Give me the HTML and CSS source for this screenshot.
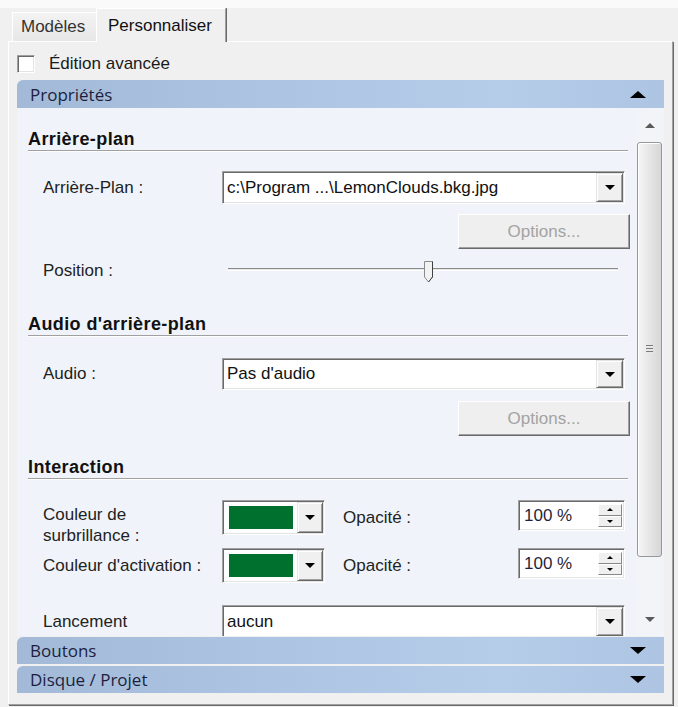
FILE: index.html
```html
<!DOCTYPE html>
<html lang="fr">
<head>
    <meta charset="UTF-8">
    <title>Personnaliser</title>
    <link rel="stylesheet" href="styles.css">
</head>
<body>
    <div class="tabs">
        <div class="tab">Modèles</div>
        <div class="tab active">Personnaliser</div>
    </div>

    <div class="panel">
        <label class="check"><span class="box"></span>Édition avancée</label>

        <div class="accordion">
            <div class="acc-head first">Propriétés<span class="tri up"></span></div>
            <div class="acc-body">
                <div class="props">
                    <div class="section-title">Arrière-plan</div>
                    <div class="field">
                        <span class="label">Arrière-Plan :</span>
                        <div class="combo">
                            <span class="combo-text">c:\Program ...\LemonClouds.bkg.jpg</span>
                            <span class="drop"><span class="arrow"></span></span>
                        </div>
                    </div>
                    <div class="actions"><button class="btn" disabled>Options...</button></div>
                    <div class="field slider-row">
                        <span class="label">Position :</span>
                        <div class="slider">
                            <div class="track"></div>
                            <svg class="thumb" width="11" height="22" viewBox="0 0 11 22">
                                <path d="M1.5 0.5 H9.5 V16 L5.5 21 L1.5 16 Z" fill="#f2f2f2" stroke="#8a8a8a"/>
                                <path d="M9.5 0.5 V16 L5.5 21" fill="none" stroke="#404040"/>
                            </svg>
                        </div>
                    </div>

                    <div class="section-title second">Audio d'arrière-plan</div>
                    <div class="field audio-row">
                        <span class="label">Audio :</span>
                        <div class="combo short">
                            <span class="combo-text">Pas d'audio</span>
                            <span class="drop"><span class="arrow"></span></span>
                        </div>
                    </div>
                    <div class="actions tight"><button class="btn" disabled>Options...</button></div>

                    <div class="section-title">Interaction</div>
                    <div class="field color-row">
                        <span class="label two-line">Couleur de<br>surbrillance :</span>
                        <div class="picker">
                            <span class="swatch"></span>
                            <span class="drop"><span class="arrow"></span></span>
                        </div>
                        <span class="opacity">Opacité :</span>
                        <div class="spinner">
                            <span class="spin-text">100 %</span>
                            <span class="spin-btns"><span><i class="tiny up"></i></span><span><i class="tiny down"></i></span></span>
                        </div>
                    </div>
                    <div class="field color-row next">
                        <span class="label">Couleur d'activation :</span>
                        <div class="picker">
                            <span class="swatch"></span>
                            <span class="drop"><span class="arrow"></span></span>
                        </div>
                        <span class="opacity">Opacité :</span>
                        <div class="spinner">
                            <span class="spin-text">100 %</span>
                            <span class="spin-btns"><span><i class="tiny up"></i></span><span><i class="tiny down"></i></span></span>
                        </div>
                    </div>
                    <div class="field launch-row">
                        <span class="label">Lancement</span>
                        <div class="combo">
                            <span class="combo-text">aucun</span>
                            <span class="drop"><span class="arrow"></span></span>
                        </div>
                    </div>
                </div>

                <div class="scrollbar">
                    <div class="sb-btn"><span class="sb-arrow up"></span></div>
                    <div class="sb-thumb"><span class="grip"></span></div>
                    <div class="sb-track"></div>
                    <div class="sb-btn"><span class="sb-arrow down"></span></div>
                </div>
            </div>
            <div class="acc-head">Boutons<span class="tri down"></span></div>
            <div class="acc-head gap">Disque / Projet<span class="tri down"></span></div>
        </div>
    </div>
</body>
</html>
```

FILE: styles.css
```css
* {
    margin: 0;
    padding: 0;
    box-sizing: border-box;
}

body {
    font-family: "Liberation Sans", Arial, sans-serif;
    font-size: 17px;
    color: #1a1a1a;
    background: linear-gradient(#fafafa 8px, #f0f0f0 8px);
    padding-top: 8px;
    width: 678px;
    height: 707px;
    overflow: hidden;
}

/* tab strip */
.tabs {
    display: flex;
    align-items: flex-end;
    height: 33px;
    margin-left: 12px;
    position: relative;
    z-index: 1;
}

.tab {
    width: 84px;
    height: 29px;
    padding-left: 8px;
    display: flex;
    align-items: center;
    background: linear-gradient(#f3f3f3, #e7e7e7);
    border-top: 1px solid #fff;
    border-left: 1px solid #fff;
    color: #333;
}

.tab.active {
    width: 130px;
    height: 34px;
    margin-bottom: -1px;
    padding-left: 11px;
    background: #f0f0f0;
    border-right: 1px solid #a0a0a0;
    box-shadow: 1px 0 0 #696969;
    color: #111;
}

.panel {
    margin-left: 8px;
    width: 665px;
    border-top: 1px solid #fff;
    border-left: 1px solid #fff;
    border-right: 1px solid #a0a0a0;
    border-bottom: 1px solid #a0a0a0;
    box-shadow: 1px 1px 0 #696969;
    padding: 6px 8px 11px 8px;
}

.check {
    display: flex;
    align-items: center;
    gap: 14px;
    height: 32px;
}

.box {
    width: 18px;
    height: 18px;
    background: #fff;
    border-top: 1px solid #a0a0a0;
    border-left: 1px solid #a0a0a0;
    border-right: 1px solid #fff;
    border-bottom: 1px solid #fff;
    box-shadow: inset 1px 1px 0 #696969, inset -1px -1px 0 #e3e3e3;
}

/* accordion */
.acc-head {
    height: 27px;
    display: flex;
    align-items: center;
    justify-content: space-between;
    padding: 0 18px 0 13px;
    margin-top: 1px;
    font-family: "Open Sans", sans-serif;
    font-size: 17px;
    color: #1d1e3f;
    background: linear-gradient(90deg, #a2bad7, #adc5e2 40%, #b5cde9 75%, #adc5e2);
    border-top-left-radius: 6px;
}

.acc-head.first {
    height: 28px;
    margin-top: 0;
}

.acc-head.gap {
    margin-top: 2px;
}

.tri {
    width: 0;
    height: 0;
    border-left: 8px solid transparent;
    border-right: 8px solid transparent;
}

.tri.up {
    border-bottom: 7px solid #000;
}

.tri.down {
    border-top: 7px solid #000;
}

.acc-body {
    display: flex;
    height: 528px;
    background: #f0f4fa;
}

.props {
    flex: 1;
    overflow: hidden;
    padding: 0 9px 0 11px;
}

.section-title {
    height: 23px;
    margin-top: 20px;
    display: flex;
    align-items: center;
    font-size: 18px;
    font-weight: bold;
    letter-spacing: 0.4px;
    color: #111;
    border-bottom: 1px solid #a0a0a0;
    box-shadow: 0 1px 0 #fff;
}

.section-title.second {
    margin-top: 30px;
}

.field {
    display: grid;
    grid-template-columns: 179px 1fr;
    align-items: center;
    margin: 20px 3px 0 15px;
}

.label {
    color: #222;
}

/* combo box */
.combo {
    height: 33px;
    display: flex;
    background: #fff;
    border-top: 1px solid #a0a0a0;
    border-left: 1px solid #a0a0a0;
    border-right: 1px solid #fff;
    border-bottom: 1px solid #fff;
    box-shadow: inset 1px 1px 0 #696969, inset -1px -1px 0 #e3e3e3;
}

.combo.short {
    height: 32px;
}

.combo-text {
    flex: 1;
    display: flex;
    align-items: center;
    padding-left: 4px;
    color: #111;
    white-space: nowrap;
}

.drop {
    width: 27px;
    margin: 1px 1px 1px 0;
    display: flex;
    align-items: center;
    justify-content: center;
    background: #f0f0f0;
    border-top: 1px solid #e3e3e3;
    border-left: 1px solid #e3e3e3;
    border-right: 1px solid #696969;
    border-bottom: 1px solid #696969;
    box-shadow: inset 1px 1px 0 #fff, inset -1px -1px 0 #a0a0a0;
}

.arrow {
    width: 0;
    height: 0;
    border-left: 5px solid transparent;
    border-right: 5px solid transparent;
    border-top: 5px solid #000;
}

.actions {
    display: flex;
    justify-content: flex-end;
    margin: 10px 1px 0 0;
}

.actions.tight {
    margin-top: 11px;
}

.btn {
    width: 172px;
    height: 35px;
    margin-right: -3px;
    font-family: "Liberation Sans", Arial, sans-serif;
    font-size: 17px;
    color: #a3a3a3;
    background: #efefef;
    border-top: 1px solid #fff;
    border-left: 1px solid #fff;
    border-right: 1px solid #696969;
    border-bottom: 1px solid #696969;
    box-shadow: inset -1px -1px 0 #a0a0a0;
}

/* slider */
.slider-row {
    margin-top: 10px;
    height: 24px;
}

.slider {
    position: relative;
    height: 24px;
    margin-left: 6px;
    width: 390px;
}

.track {
    margin-top: 9px;
    height: 3px;
    background: #e8e8e8;
    border-top: 1px solid #8a8a8a;
    border-bottom: 1px solid #fff;
}

.thumb {
    position: absolute;
    left: 195px;
    top: 2px;
}

.audio-row {
    margin-top: 22px;
}

/* colour rows */
.color-row {
    grid-template-columns: 179px 103px 1fr 107px;
    grid-template-rows: 35px;
    align-items: start;
    height: 35px;
    margin-top: 21px;
}

.color-row.next {
    margin-top: 13px;
}

.color-row .label {
    align-self: center;
}

.color-row .two-line {
    align-self: start;
    line-height: 21px;
    padding-top: 4px;
}

.picker {
    height: 35px;
    display: flex;
    background: #fff;
    border-top: 1px solid #a0a0a0;
    border-left: 1px solid #a0a0a0;
    border-right: 1px solid #fff;
    border-bottom: 1px solid #fff;
    box-shadow: inset 1px 1px 0 #696969, inset -1px -1px 0 #e3e3e3;
}

.swatch {
    width: 64px;
    margin: 5px 4px 5px 6px;
    background: #00702e;
}

.picker .drop {
    flex: 1;
}

.opacity {
    align-self: center;
    padding-left: 18px;
    color: #222;
}

.spinner {
    height: 31px;
    display: flex;
    background: #fff;
    border-top: 1px solid #a0a0a0;
    border-left: 1px solid #a0a0a0;
    border-right: 1px solid #fff;
    border-bottom: 1px solid #fff;
    box-shadow: inset 1px 1px 0 #696969, inset -1px -1px 0 #e3e3e3;
}

.spin-text {
    flex: 1;
    display: flex;
    align-items: center;
    padding-left: 5px;
    color: #2a1f3a;
}

.spin-btns {
    width: 24px;
    margin: 3px 2px 3px 0;
    display: flex;
    flex-direction: column;
}

.spin-btns span {
    flex: 1;
    display: flex;
    align-items: center;
    justify-content: center;
    background: #f0f0f0;
    border-top: 1px solid #fff;
    border-left: 1px solid #fff;
    border-right: 1px solid #888;
    border-bottom: 1px solid #888;
}

.tiny {
    width: 0;
    height: 0;
    border-left: 3px solid transparent;
    border-right: 3px solid transparent;
}

.tiny.up {
    border-bottom: 3px solid #000;
}

.tiny.down {
    border-top: 3px solid #000;
}

.launch-row {
    margin-top: 22px;
}

/* scrollbar */
.scrollbar {
    width: 25px;
    margin-right: 2px;
    display: flex;
    flex-direction: column;
    background: #f2f4f7;
}

.sb-btn {
    height: 34px;
    display: flex;
    align-items: center;
    justify-content: center;
}

.sb-arrow {
    width: 0;
    height: 0;
    border-left: 5px solid transparent;
    border-right: 5px solid transparent;
}

.sb-arrow.up {
    border-bottom: 5px solid #5a5a5a;
}

.sb-arrow.down {
    border-top: 5px solid #5a5a5a;
}

.sb-thumb {
    height: 415px;
    display: flex;
    align-items: center;
    justify-content: center;
    border: 1px solid #979797;
    border-radius: 3px;
    background: linear-gradient(90deg, #f6f6f6, #e6e6e6 50%, #d6d6d6);
    box-shadow: inset 1px 1px 0 #fff;
}

.grip {
    width: 7px;
    height: 9px;
    background: repeating-linear-gradient(#7a7a7a 0 1px, #e8e8e8 1px 2px, transparent 2px 3px);
}

.sb-track {
    flex: 1;
}
```
